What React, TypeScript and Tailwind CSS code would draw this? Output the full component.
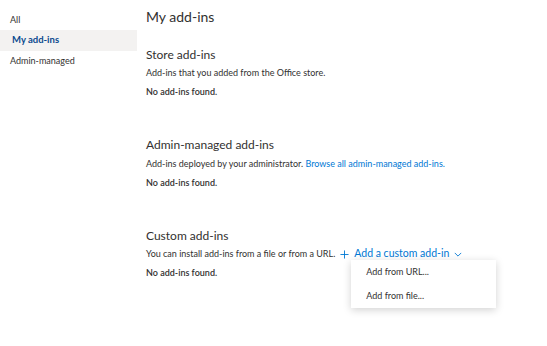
export default function App() {
  return (
    <div
      className="flex w-[547px] h-[346px] bg-white text-[#323130]"
      style={{ fontFamily: "'Segoe UI', Lato, 'Open Sans', sans-serif" }}
    >
      <nav className="w-[137px] pt-[10px] text-[9px]">
        <div className="h-[20px] pl-[10px] flex items-center">All</div>
        <div className="h-[21px] pl-[12px] flex items-center bg-[#f3f2f1] font-bold text-[9.5px] text-[#0b4a8f]">
          My add-ins
        </div>
        <div className="h-[20px] pl-[10px] flex items-center">Admin-managed</div>
      </nav>

      <main className="flex-1 pl-[9px] pt-[7px]">
        <h1 className="text-[14px] leading-[20px]">My add-ins</h1>

        <section className="mt-[20px]">
          <h2 className="text-[12px] leading-[16px]">Store add-ins</h2>
          <p className="text-[9px] leading-[13px] mt-[3px]">
            Add-ins that you added from the Office store.
          </p>
          <p className="text-[9px] leading-[13px] mt-[6px] font-semibold">No add-ins found.</p>
        </section>

        <section className="mt-[39px]">
          <h2 className="text-[12px] leading-[16px]">Admin-managed add-ins</h2>
          <p className="text-[9px] leading-[13px] mt-[4px]">
            Add-ins deployed by your administrator.{" "}
            <span className="text-[#0078d4]">Browse all admin-managed add-ins.</span>
          </p>
          <p className="text-[9px] leading-[13px] mt-[6px] font-semibold">No add-ins found.</p>
        </section>

        <section className="mt-[39px]">
          <h2 className="text-[12px] leading-[16px]">Custom add-ins</h2>
          <div className="flex items-center mt-[2px] h-[16px]">
            <span className="text-[9px]">You can install add-ins from a file or from a URL.</span>
            <div className="relative ml-[5px]">
              <button className="flex items-center gap-[5px] text-[10.5px] text-[#0078d4]">
                <svg width="9" height="9" viewBox="0 0 10 10" fill="none" stroke="currentColor" strokeWidth="1">
                  <path d="M5 0.5v9M0.5 5h9" />
                </svg>
                <span>Add a custom add-in</span>
                <svg width="8" height="5" viewBox="0 0 10 6" fill="none" stroke="currentColor" strokeWidth="1.1">
                  <path d="M1 1l4 4 4-4" />
                </svg>
              </button>
              <div className="absolute left-[11px] top-[14px] w-[145px] bg-white shadow-[0_2px_8px_rgba(0,0,0,0.18)] text-[9px]">
                <div className="h-[24px] pl-[15px] flex items-center">Add from URL...</div>
                <div className="h-[24px] pl-[15px] flex items-center">Add from file...</div>
              </div>
            </div>
          </div>
          <p className="text-[9px] leading-[13px] mt-[4px] font-semibold">No add-ins found.</p>
        </section>
      </main>
    </div>
  );
}
